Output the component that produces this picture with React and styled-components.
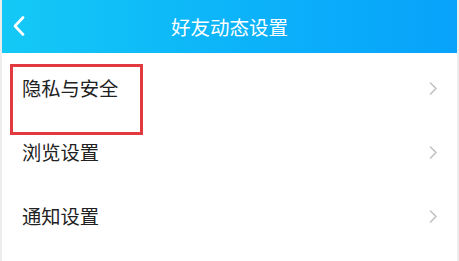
import React from 'react';
import styled, { createGlobalStyle } from 'styled-components';

const GlobalStyle = createGlobalStyle`
  html, body {
    margin: 0;
    padding: 0;
    background: #ffffff;
  }
  body {
    font-family: "Noto Sans CJK SC", "Noto Sans", sans-serif;
  }
`;

const items = [
  { id: 'privacy', label: '隐私与安全', highlight: true },
  { id: 'browse', label: '浏览设置' },
  { id: 'notify', label: '通知设置' },
];

const ChevronLeft = () => (
  <svg width="12" height="20" viewBox="0 0 12 20" fill="none">
    <path d="M10 1.5 L2 10 L10 18.5" stroke="#ffffff" strokeWidth="2.6" strokeLinecap="round" strokeLinejoin="round" />
  </svg>
);

const ChevronRight = () => (
  <svg width="9" height="13" viewBox="0 0 9 13" fill="none">
    <path d="M1.5 1 L7 6.5 L1.5 12" stroke="#c2c2c2" strokeWidth="1.6" strokeLinecap="round" strokeLinejoin="round" />
  </svg>
);

const App = () => {
  return (
    <>
      <GlobalStyle />
      <Page>
        <Header>
          <BackButton type="button">
            <ChevronLeft />
          </BackButton>
          <Title>好友动态设置</Title>
        </Header>
        <List>
          {items.map((item) => (
            <Row key={item.id}>
              <Label>{item.label}</Label>
              <ChevronRight />
              {item.highlight && <Highlight />}
            </Row>
          ))}
        </List>
      </Page>
    </>
  );
};

const Page = styled.div`
  width: 459px;
  height: 261px;
  box-sizing: border-box;
  border-left: 2px solid #ededed;
  border-right: 2px solid #ededed;
  background: #ffffff;
  display: flex;
  flex-direction: column;
  overflow: hidden;
`;

const Header = styled.header`
  position: relative;
  height: 53px;
  flex-shrink: 0;
  display: flex;
  align-items: center;
  justify-content: center;
  background: linear-gradient(90deg, #14c9f6 0%, #0cb4f9 50%, #08a2fb 100%);
`;

const BackButton = styled.button`
  position: absolute;
  left: 11px;
  top: 16px;
  padding: 0;
  border: none;
  background: transparent;
  display: flex;
`;

const Title = styled.h1`
  margin: 0;
  margin-bottom: 0;
  font-size: 19.5px;
  font-weight: 400;
  color: #ffffff;
  letter-spacing: 0;
`;

const List = styled.ul`
  list-style: none;
  margin: 0;
  padding: 3px 0 0;
`;

const Row = styled.li`
  position: relative;
  height: 64px;
  display: flex;
  align-items: center;
  justify-content: space-between;
  padding: 0 19px 0 20px;
`;

const Label = styled.span`
  font-size: 19.3px;
  color: #222222;
`;

const Highlight = styled.span`
  position: absolute;
  left: 8px;
  top: 8px;
  width: 133px;
  height: 71px;
  box-sizing: border-box;
  border: 3px solid #e23b3f;
  pointer-events: none;
`;

export default App;
